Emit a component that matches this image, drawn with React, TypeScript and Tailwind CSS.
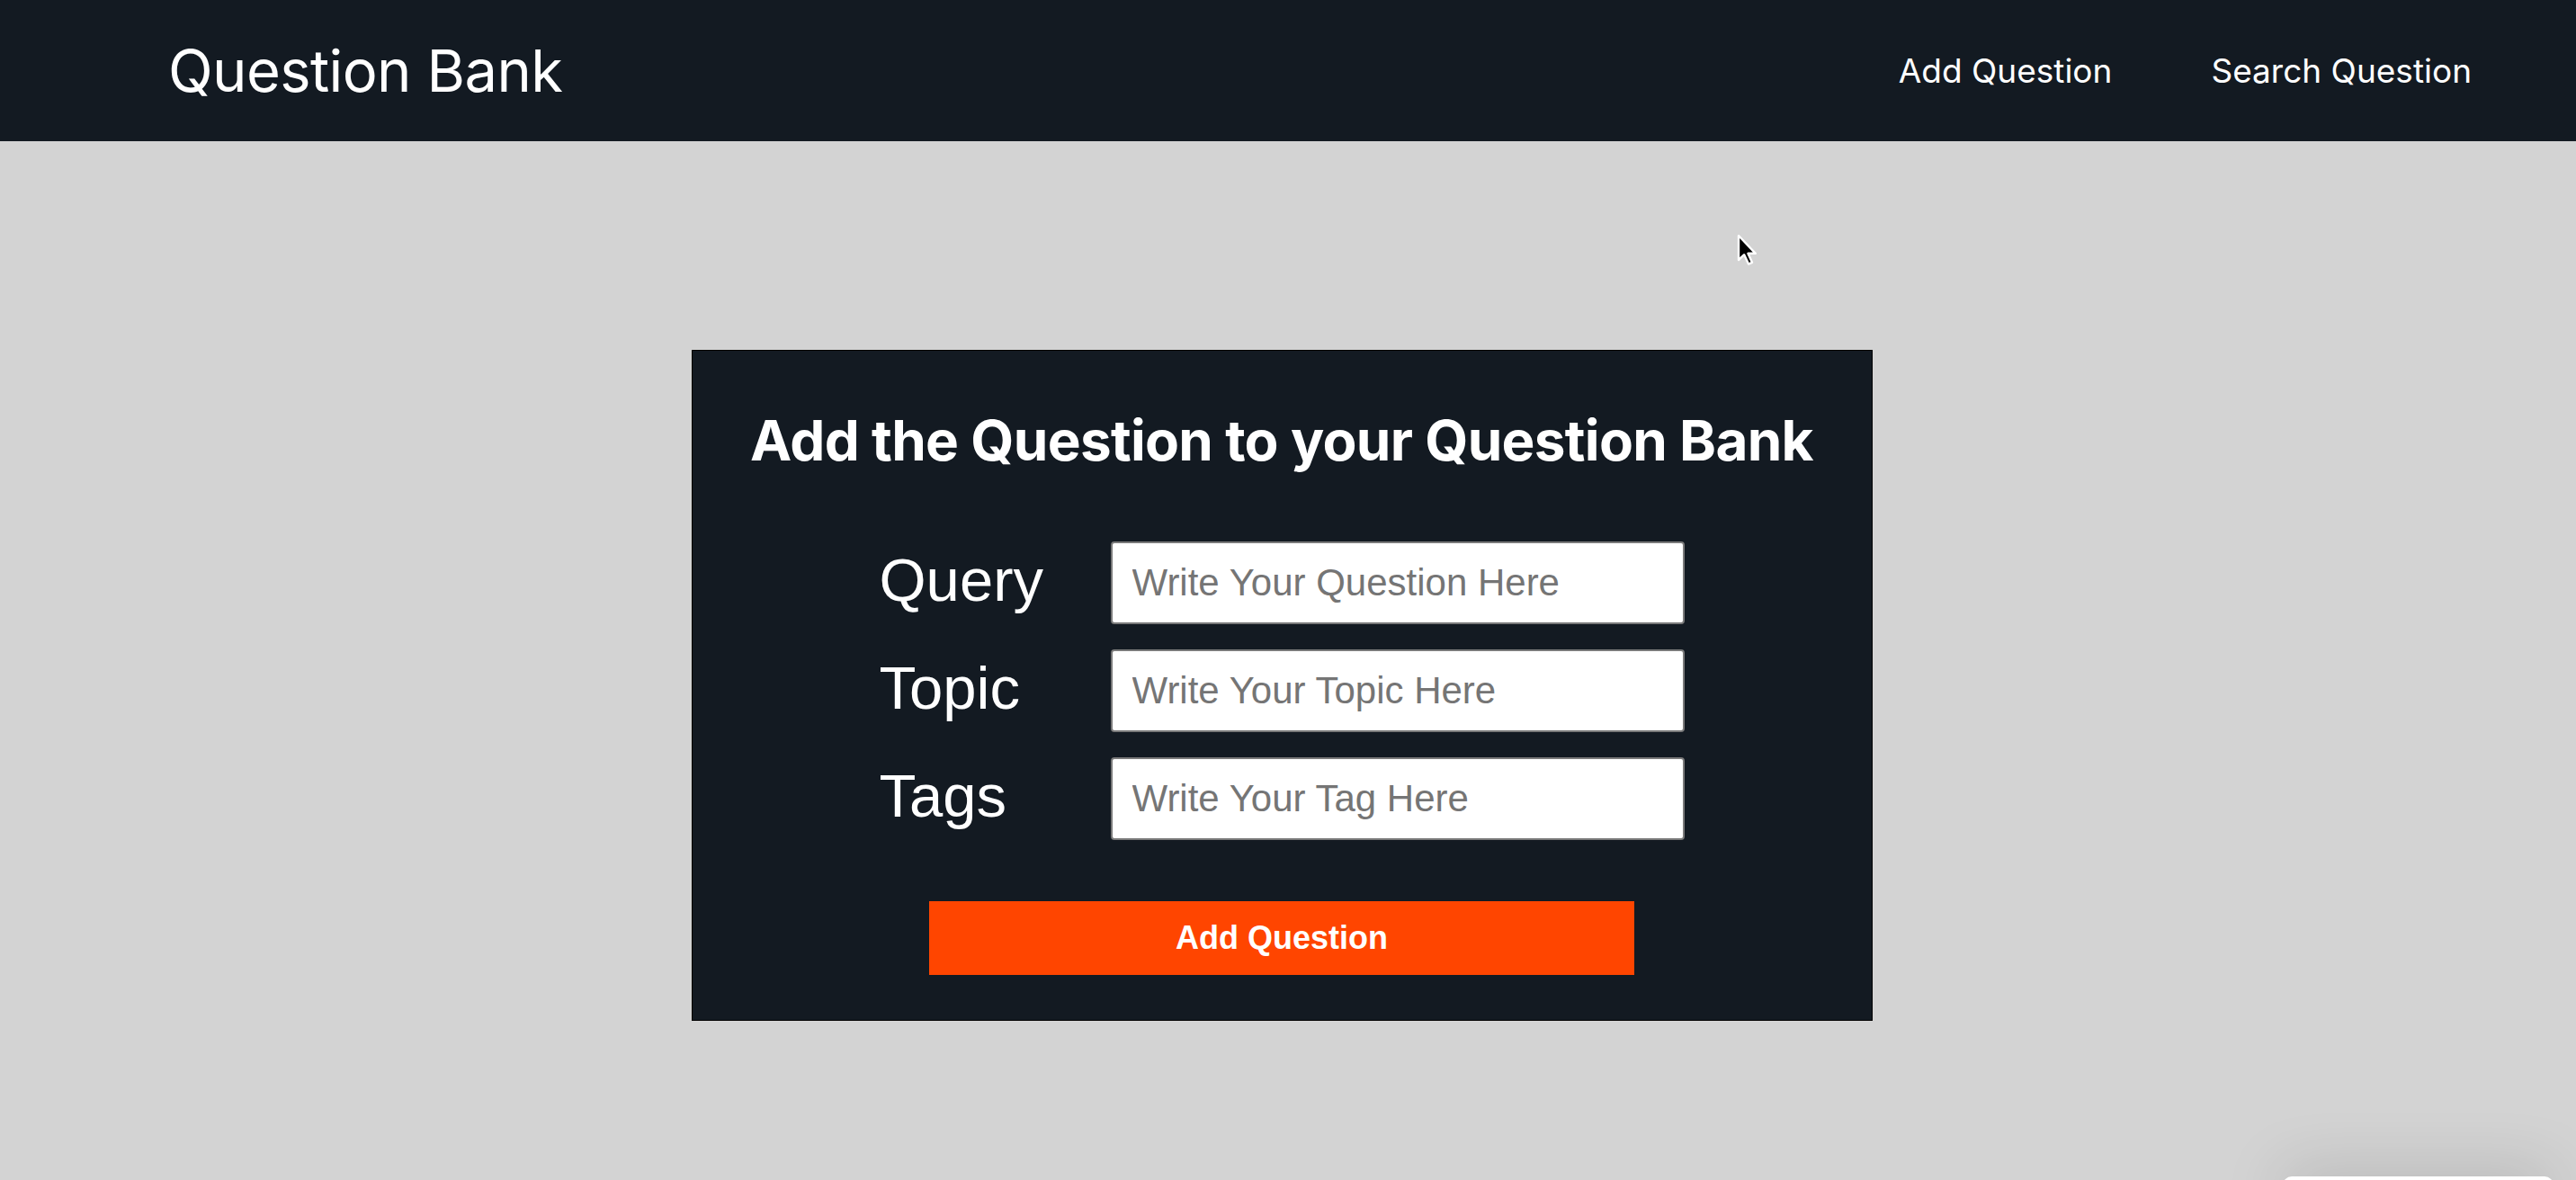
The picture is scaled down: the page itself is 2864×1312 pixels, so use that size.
import React from "react";

const fields = [
  { label: "Query", placeholder: "Write Your Question Here" },
  { label: "Topic", placeholder: "Write Your Topic Here" },
  { label: "Tags", placeholder: "Write Your Tag Here" },
];

function Cursor() {
  return (
    <svg
      className="absolute left-[1930px] top-[259px]"
      width="26"
      height="38"
      viewBox="0 0 13 19"
    >
      <path
        d="M1.5 1.5 L1.5 15 L4.6 12.1 L7 17.3 L9 16.4 L6.7 11.4 L10.9 11.4 Z"
        fill="#000"
        stroke="#fff"
        strokeWidth="1.2"
        strokeLinejoin="round"
      />
    </svg>
  );
}

export default function App() {
  return (
    <div className="relative h-[1312px] overflow-hidden bg-[#d3d3d3] font-['Inter',sans-serif]">
      <header className="h-[157px] bg-[#131a22] flex items-center justify-between pl-[187px] pr-[116px] text-white">
        <h1 className="text-[65px] leading-none font-normal tracking-[-0.6px]">Question Bank</h1>
        <nav className="flex gap-[110px] text-[37px] leading-none">
          <a href="#">Add Question</a>
          <a href="#">Search Question</a>
        </nav>
      </header>

      <main className="flex justify-center pt-[232px] pr-[14px]">
        <div className="w-[1313px] h-[746px] bg-[#131a22] border border-black pt-[62px] text-white">
          <h2 className="text-center text-[62px] leading-[76px] font-bold tracking-[-0.7px]">
            Add the Question to your Question Bank
          </h2>

          <form className="mt-[74px] flex flex-col items-center">
            <div className="flex flex-col gap-[28px]">
              {fields.map((f) => (
                <div key={f.label} className="flex items-start h-[92px]">
                  <label className="w-[257px] mt-[5px] text-[67px] leading-[76px] font-['Liberation_Sans',Arial,sans-serif]">
                    {f.label}
                  </label>
                  <input
                    className="w-[638px] h-[92px] bg-white border-2 border-[#7a7a7a] rounded-[4px] pl-[22px] text-[42px] text-black placeholder:text-[#757575] font-['Liberation_Sans',Arial,sans-serif] outline-none"
                    placeholder={f.placeholder}
                  />
                </div>
              ))}
            </div>

            <button
              type="button"
              className="mt-[68px] w-[784px] h-[82px] bg-[#ff4500] text-white text-[36px] font-bold font-['Liberation_Sans',Arial,sans-serif]"
            >
              Add Question
            </button>
          </form>
        </div>
      </main>

      <Cursor />

      <div className="absolute left-[2538px] top-[1308px] w-[301px] h-[30px] bg-white rounded-[10px] shadow-[0_0_70px_rgba(0,0,0,0.22)]" />
    </div>
  );
}
